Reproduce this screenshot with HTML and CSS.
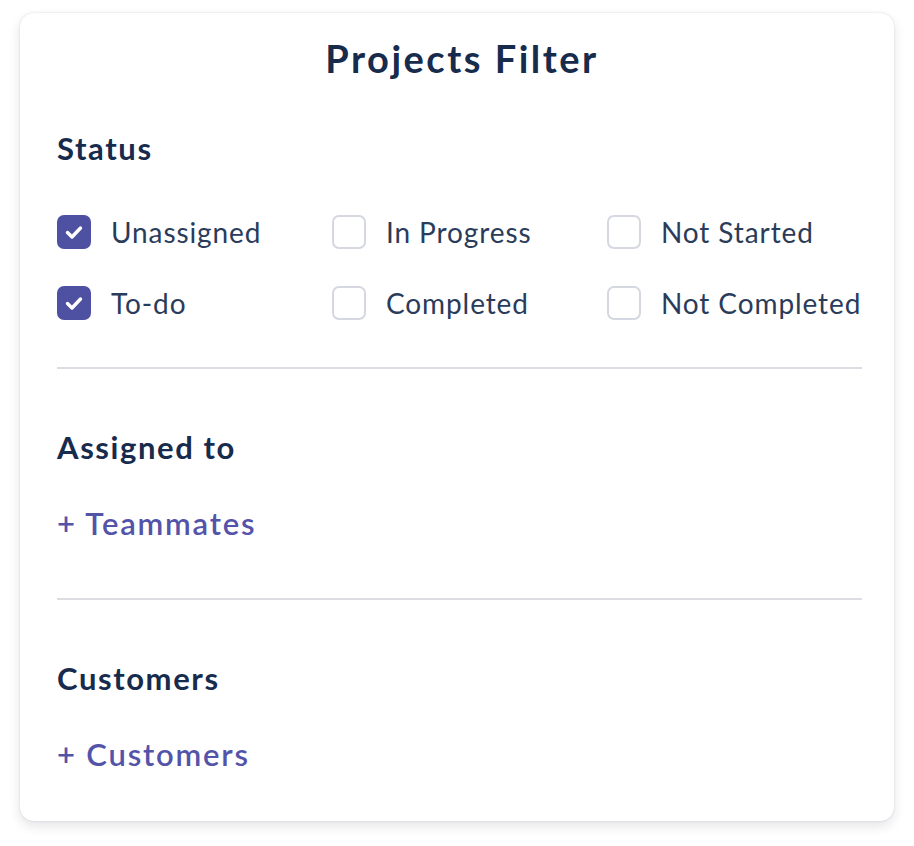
FILE: index.html
```html
<!DOCTYPE html>
<html>
<head>
<meta charset="utf-8">
<link rel="stylesheet" href="styles.css">
</head>
<body>
<div class="card">
  <h1 class="title">Projects Filter</h1>

  <section class="section">
    <h2 class="heading">Status</h2>
    <div class="options">
      <label class="option"><span class="box checked"><svg viewBox="0 0 34 34" width="34" height="34"><path d="M10.5 17.5 L15 22 L23.5 13" fill="none" stroke="#fff" stroke-width="3.4" stroke-linecap="round" stroke-linejoin="round"/></svg></span><span class="label">Unassigned</span></label>
      <label class="option"><span class="box"></span><span class="label">In Progress</span></label>
      <label class="option"><span class="box"></span><span class="label">Not Started</span></label>
      <label class="option"><span class="box checked"><svg viewBox="0 0 34 34" width="34" height="34"><path d="M10.5 17.5 L15 22 L23.5 13" fill="none" stroke="#fff" stroke-width="3.4" stroke-linecap="round" stroke-linejoin="round"/></svg></span><span class="label">To-do</span></label>
      <label class="option"><span class="box"></span><span class="label">Completed</span></label>
      <label class="option"><span class="box"></span><span class="label">Not Completed</span></label>
    </div>
  </section>

  <hr class="divider">

  <section class="section section-b">
    <h2 class="heading">Assigned to</h2>
    <a class="add-link">+ Teammates</a>
  </section>

  <hr class="divider divider-b">

  <section class="section section-b">
    <h2 class="heading">Customers</h2>
    <a class="add-link">+ Customers</a>
  </section>
</div>
</body>
</html>
```

FILE: styles.css
```css
* { box-sizing: border-box; }

html, body {
  margin: 0;
  padding: 0;
  background: #ffffff;
}

body {
  font-family: Lato, "Noto Sans", sans-serif;
  color: #172b4d;
  padding: 13px 20px 25px 20px;
}

.card {
  width: 874px;
  height: 808px;
  background: #ffffff;
  border-radius: 14px;
  box-shadow: 0 0 2px rgba(30, 30, 60, 0.16), 0 5px 12px rgba(30, 30, 60, 0.12);
  padding: 25px 32px 0 37px;
  display: flex;
  flex-direction: column;
}

.title {
  margin: 0;
  font-size: 38px;
  line-height: 40px;
  font-weight: 700;
  letter-spacing: 2.5px;
  text-align: center;
  color: #172b4d;
  padding-left: 5px;
}

.section {
  display: flex;
  flex-direction: column;
  margin-top: 52px;
}

.section-b {
  margin-top: 60px;
}

.heading {
  margin: 0;
  font-size: 31px;
  line-height: 36px;
  font-weight: 700;
  letter-spacing: 1.6px;
  color: #172b4d;
}

.options {
  margin-top: 49px;
  display: grid;
  grid-template-columns: 275px 275px 1fr;
  row-gap: 37px;
}

.option {
  display: flex;
  align-items: center;
  gap: 20px;
  height: 34px;
}

.box {
  width: 34px;
  height: 34px;
  flex: none;
  border: 2px solid #d5d8e0;
  border-radius: 7px;
  background: #fff;
  display: flex;
  align-items: center;
  justify-content: center;
}

.box.checked {
  background: #4e50a2;
  border-color: #4e50a2;
}

.box svg {
  display: block;
  margin: -2px;
}

.label {
  font-size: 28px;
  line-height: 34px;
  font-weight: 400;
  letter-spacing: 0.9px;
  color: #2a3c5a;
}

.divider {
  margin: 47px 0 0 0;
  border: 0;
  height: 2px;
  background: #dcdde2;
}

.divider-b {
  margin-top: 57px;
}

.add-link {
  margin-top: 40px;
  font-size: 31px;
  line-height: 36px;
  font-weight: 600;
  letter-spacing: 1.8px;
  color: #5354a9;
}
```
